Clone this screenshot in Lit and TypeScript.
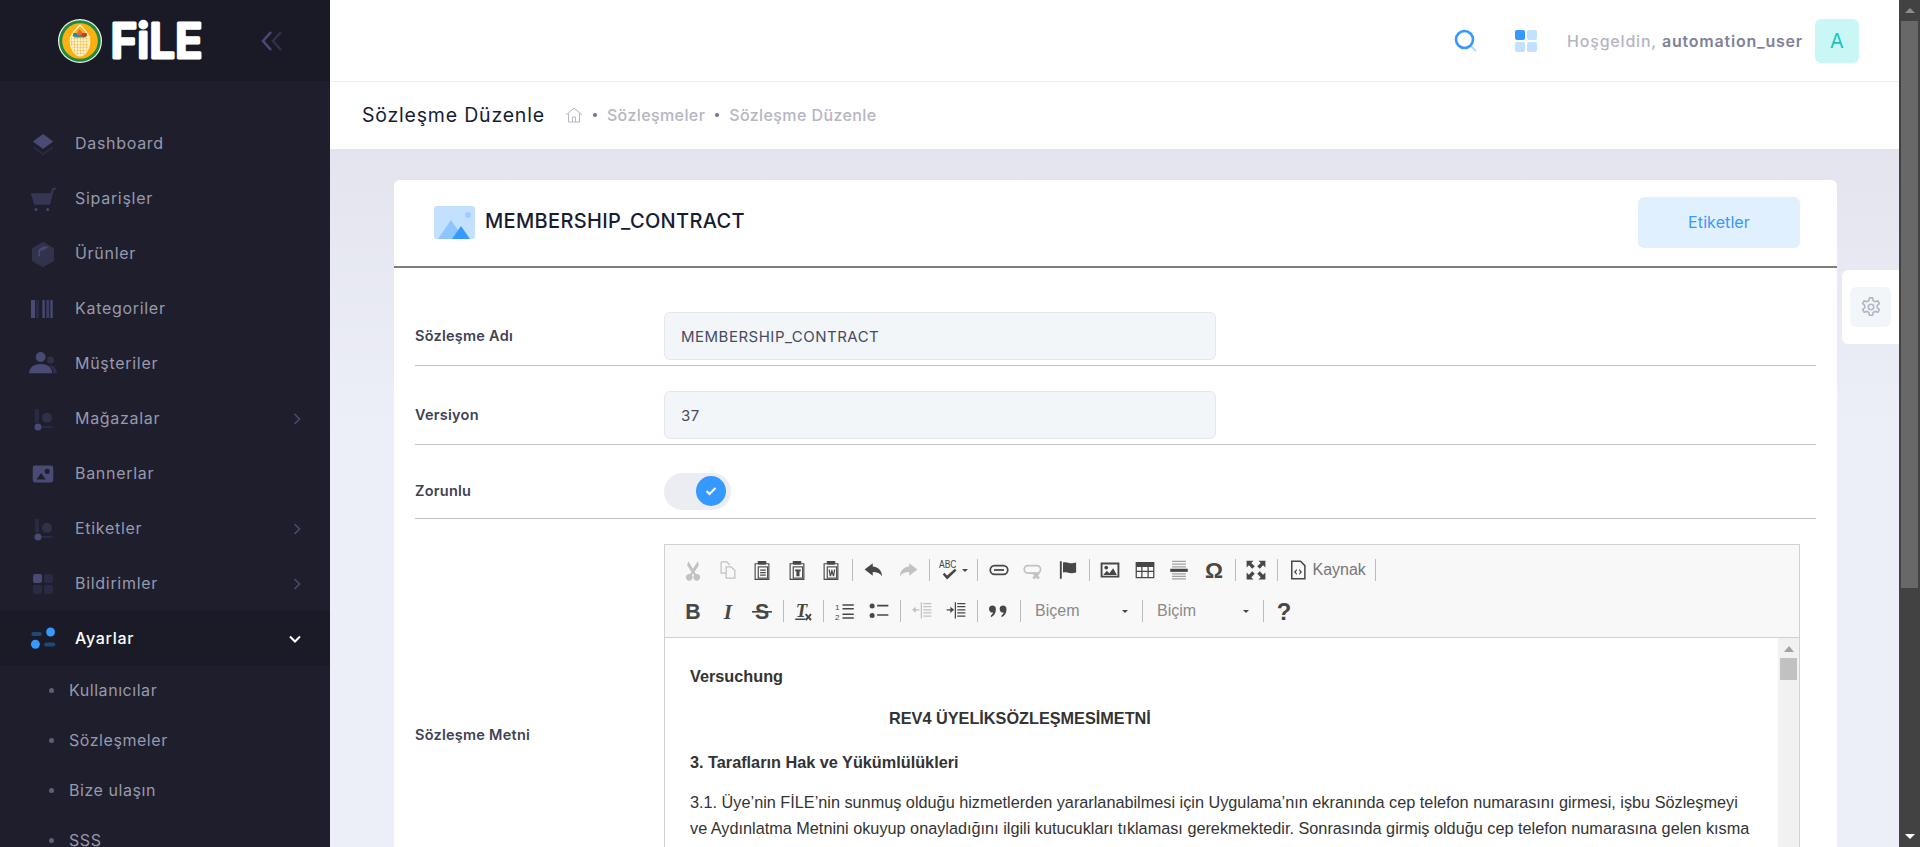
import { LitElement, css, html, svg } from 'lit';
import { customElement } from 'lit/decorators.js';

const DIM = '#494b74';

const duo = (body: unknown) =>
  html`<svg viewBox="0 0 24 24" width="28" height="28" fill="${DIM}">${body}</svg>`;

const ROUTE = svg`<path opacity=".3" d="M5 3.500h3.500V15H5ZM9 18h11v1.500H9Z"/><circle cx="7.700" cy="18.900" r="3"/><circle opacity=".4" cx="15.400" cy="11" r="4.300"/>`;

const navIcons: Record<string, unknown> = {
  layers: duo(svg`<g transform="translate(1.600 1.600) scale(.87)"><path d="M12 2 22 9.600 12 17 2 9.600Z"/><path opacity=".3" d="M3 14.500 12 21l9-6.500.9 1.300L12 23 2.100 15.800Z"/></g>`),
  cart: duo(svg`<path opacity=".55" d="M1.500 7h17l1.600-4.600h2.900v1.600h-1.700L18 17H4.500Z"/><circle opacity=".9" cx="6" cy="21" r="1.300"/><circle opacity=".9" cx="16" cy="21" r="1.300"/>`),
  box: duo(svg`<path opacity=".45" d="M12 1.500 21.500 7v11L12 23.300 2.500 18V7Z"/><path d="M12 5.500 17 5.500 12.800 8.500 9.500 9.500 9.500 14 8 14 8 8.500Z" opacity=".9"/>`),
  barcode: duo(svg`<path d="M1.700 4.300h3.500v15.400H1.700Z"/><path opacity=".3" d="M6 4.300h2.500v15.400H6Z"/><path d="M11.500 4.300h2v15.400h-2Z"/><path opacity=".7" d="M14.800 4.300h2.500v15.400h-2.500Z"/><path d="M18.300 4.300h2v15.400h-2Z"/>`),
  users: duo(svg`<circle cx="10" cy="6" r="4.200"/><path d="M0 20c.5-5.500 4.500-8 10-8s9.500 2.500 10 8Z"/><circle opacity=".4" cx="18.500" cy="8.500" r="3"/><path opacity=".4" d="M17 13c3.500 0 6.400 2 7 7h-2.800c-.6-3-1.800-5-4.200-7Z"/>`),
  route: duo(ROUTE),
  banner: duo(svg`<g transform="translate(2.400 2.400) scale(.8)"><path fill-rule="evenodd" d="M3.500 3h17A2.500 2.500 0 0 1 23 5.500v13a2.500 2.500 0 0 1-2.500 2.500h-17A2.500 2.500 0 0 1 1 18.500v-13A2.500 2.500 0 0 1 3.500 3Zm13 3.500a2.700 2.700 0 1 0 0 5.400 2.700 2.700 0 0 0 0-5.400ZM10 11l-5 7h10Z"/></g>`),
  grid: duo(svg`<g transform="translate(1.800 1.800) scale(.85)"><rect x="2" y="2" width="9" height="9" rx="2"/><rect opacity=".3" x="13" y="2" width="9" height="9" rx="2"/><rect opacity=".3" x="2" y="13" width="9" height="9" rx="2"/><rect opacity=".3" x="13" y="13" width="9" height="9" rx="2"/></g>`),
  settings: html`<svg viewBox="0 0 24 24" width="28" height="28" fill="#3699ff"><rect opacity=".35" x="2" y="6" width="9" height="3.500" rx="1.700"/><circle cx="18.500" cy="6" r="3.800"/><circle cx="5.500" cy="16.500" r="3.800"/><rect opacity=".35" x="13" y="15" width="9.500" height="3.500" rx="1.700"/></svg>`,
};

interface NavItem {
  label: string;
  icon: string;
  arrow?: boolean;
  active?: boolean;
}

const NAV: NavItem[] = [
  { label: 'Dashboard', icon: 'layers' },
  { label: 'Siparişler', icon: 'cart' },
  { label: 'Ürünler', icon: 'box' },
  { label: 'Kategoriler', icon: 'barcode' },
  { label: 'Müşteriler', icon: 'users' },
  { label: 'Mağazalar', icon: 'route', arrow: true },
  { label: 'Bannerlar', icon: 'banner' },
  { label: 'Etiketler', icon: 'route', arrow: true },
  { label: 'Bildirimler', icon: 'grid', arrow: true },
  { label: 'Ayarlar', icon: 'settings', active: true },
];

const SUB_NAV = ['Kullanıcılar', 'Sözleşmeler', 'Bize ulaşın', 'SSS'];

// ckeditor toolbar glyphs, all on a 16 grid, shown at 20px
const clip = (inner: unknown) => svg`
  <path d="M2.500 3H5V1.500h6V3h2.500v12.500h-11Z" fill="none" stroke="currentColor" stroke-width=".9"/>
  <path d="M5 .8h6v3H5Z"/>
  <rect x="5" y="5.500" width="7.500" height="9" fill="#f8f8f8" stroke="currentColor" stroke-width=".9"/>
  ${inner}`;

const toolGlyphs: Record<string, unknown> = {
  cut: svg`<path d="M4.200 1 8 7l3.800-6 .9 3.200L9.200 9.500l1.300 1.700a2.700 2.700 0 1 1-1.600 1L8 10.800l-.9 1.400a2.700 2.700 0 1 1-1.600-1l1.300-1.700L3.300 4.200Z"/>`,
  copy: svg`<path d="M2.500 1.500H7L9.500 4M6.500 5.500h4l3 3v6h-7ZM2.500 1.500v9h4" fill="none" stroke="currentColor"/>`,
  paste: clip(svg`<path d="M6.500 7.500H11v1H6.500ZM6.500 9.500H11v1H6.500ZM6.500 11.500H11v1H6.500Z"/>`),
  pasteText: clip(svg`<path d="M6.500 7.500H11v1.500h-1V13H7.500V9h-1Z"/>`),
  pasteWord: clip(svg`<path d="M6 7.500h1l.6 3.500.8-3.500h.6l.8 3.500.6-3.500h1L10.500 13h-1L8.800 10.500 8 13H7Z"/>`),
  undo: svg`<path d="M7 2.500.5 7.500 7 12.500V9.500c3.500 0 5.800 1 7.500 3.500-.3-4.500-3-7.500-7.500-7.800Z"/>`,
  redo: svg`<path d="M9 2.500l6.500 5L9 12.500V9.500c-3.500 0-5.800 1-7.500 3.500.3-4.500 3-7.500 7.500-7.800Z"/>`,
  spell: svg`<text x="0" y="6.500" font-family="Liberation Sans" font-size="8.500" textLength="14" lengthAdjust="spacingAndGlyphs">ABC</text><path d="M3 11.500l1.300-1.300 2.200 2.200L12.700 7l1.300 1.300-7.500 7.200Z"/>`,
  link: svg`<rect x="1" y="4.500" width="14" height="7" rx="3.500" fill="none" stroke="currentColor" stroke-width="1.400"/><path d="M4 7.300h8v1.400H4Z"/>`,
  unlink: svg`<rect x="1" y="4.500" width="13" height="6" rx="3" fill="none" stroke="currentColor" stroke-width="1.400"/><path d="M9 9.500l1.500 1.500 1.500-1.500 1.500 1.500-1.500 1.500 1.500 1.500-1.500 1.500-1.500-1.500-1.500 1.500-1.500-1.500 1.500-1.500-1.500-1.500Z"/>`,
  anchor: svg`<path d="M1.500 1h1.500v14H1.500ZM4 2c3-1 5 1 7.500.5.800 0 2-.3 3-.5v8c-3 1-5 .7-7 0-1.500-.4-2.500-.4-3.500 0Z"/>`,
  image: svg`<path fill-rule="evenodd" d="M.5 2h15v12H.5Zm1.500 1.500v9h12v-9Z"/><circle cx="5" cy="6" r="1.500"/><path d="M2.500 12l3-3.500 2 2 3-4 3 5.500Z"/>`,
  table: svg`<path fill-rule="evenodd" d="M.5 1.500h15v13H.5Zm1 4v3h3.500v-3Zm4.500 0v3h4v-3Zm5 0v3h3.500v-3Zm-9.500 4v4h3.500v-4Zm4.500 0v4h4v-4Zm5 0v4h3.500v-4Z"/>`,
  hr: svg`<path d="M1 7h14v2.500H1Z"/><path opacity=".5" d="M2.500 .5h11v1h-11ZM2.500 2.800h11v1h-11ZM2.500 5h11v1h-11ZM2.500 10.500h11v1h-11ZM2.500 12.500h11v1h-11ZM2.500 14.500h11v1h-11Z"/>`,
  omega: svg`<text x="8" y="14" text-anchor="middle" font-family="Liberation Sans" font-size="18" font-weight="700">Ω</text>`,
  maximize: svg`<path d="M.5.500h5.500L4.200 2.300 7 5 5 7 2.300 4.200.5 6ZM15.500.500V6l-1.800-1.800L11 7 9 5l2.800-2.700L10 .5ZM.5 15.500V10l1.800 1.800L5 9l2 2-2.800 2.700L6 15.500ZM15.500 15.500H10l1.800-1.800L9 11l2-2 2.700 2.800L15.500 10Z"/>`,
  source: svg`<path d="M3 1h7l3.500 3.500V15H3Z" fill="none" stroke="currentColor" stroke-width="1.200"/><path d="M7 7 4.800 9.500 7 12V10.500L6.200 9.500 7 8.500ZM9 7l2.200 2.500L9 12v-1.500l.8-1-.8-1Z"/>`,
  bold: svg`<text x="8" y="14" text-anchor="middle" font-family="Liberation Sans" font-size="17" font-weight="700">B</text>`,
  italic: svg`<text x="8" y="14" text-anchor="middle" font-family="Liberation Serif" font-size="17" font-weight="700" font-style="italic">I</text>`,
  strike: svg`<text x="8" y="14" text-anchor="middle" font-family="Liberation Sans" font-size="17" font-weight="700">S</text><path d="M0 8h16v1.300H0Z"/>`,
  removeFormat: svg`<text x="6" y="12.500" text-anchor="middle" font-family="Liberation Serif" font-size="15" font-weight="700" font-style="italic">T</text><path d="M1 14h8v1.200H1Z"/><path d="M10 10l1.500 1.700L13 10l1.200 1-1.600 1.800 1.600 1.900-1.200 1-1.500-1.800L10 15.700l-1.200-1 1.600-1.900L8.800 11Z"/>`,
  numbered: svg`<path d="M6 2.500h9v1.200H6ZM6 5.500h9v1.200H6ZM6 10h9v1.200H6ZM6 13h9v1.200H6Z"/><text x="0" y="7" font-family="Liberation Sans" font-size="6.500">1</text><text x="0" y="15" font-family="Liberation Sans" font-size="6.500">2</text>`,
  bulleted: svg`<circle cx="2.500" cy="4" r="2"/><circle cx="2.500" cy="11.500" r="2"/><path d="M6.500 3h9v1.300h-9ZM6.500 10.500h9v1.300h-9Z"/>`,
  outdent: svg`<path d="M9 1.500h6.500v1H9ZM9 4h6.500v1H9ZM9 6.500h6.500v1H9ZM9 9h6.500v1H9ZM9 11.500h6.500v1H9ZM7 1h1v13H7Z"/><path d="M6 6.500H3v-2L0 7l3 2.500v-2h3Z"/>`,
  indent: svg`<path d="M9 1.500h6.500v1H9ZM9 4h6.500v1H9ZM9 6.500h6.500v1H9ZM9 9h6.500v1H9ZM9 11.500h6.500v1H9ZM7 1h1v13H7Z"/><path d="M.5 6.500h3v-2L6.500 7l-3 2.500v-2h-3Z"/>`,
  quote: svg`<path d="M2.500 3.500a3 3 0 0 1 3 3c0 3-1.500 5.500-4 6.500v-1.500c1-.6 1.500-1.500 1.800-2.300A2.800 2.800 0 0 1 2.500 3.500ZM11 3.500a3 3 0 0 1 3 3c0 3-1.500 5.500-4 6.500v-1.500c1-.6 1.500-1.500 1.800-2.300a2.800 2.800 0 0 1-.8-5.700Z"/>`,
  help: svg`<text x="8" y="15" text-anchor="middle" font-family="Liberation Sans" font-size="19" font-weight="700">?</text>`,
};

type Tool =
  | { sep: true }
  | { glyph: string; off?: boolean; caret?: boolean; label?: string; narrow?: boolean }
  | { combo: string; width: number };

const SEP: Tool = { sep: true };

const ROW_ONE: Tool[] = [
  { glyph: 'cut', off: true },
  { glyph: 'copy', off: true },
  { glyph: 'paste' },
  { glyph: 'pasteText' },
  { glyph: 'pasteWord' },
  SEP,
  { glyph: 'undo' },
  { glyph: 'redo', off: true },
  SEP,
  { glyph: 'spell', caret: true },
  SEP,
  { glyph: 'link' },
  { glyph: 'unlink', off: true },
  { glyph: 'anchor' },
  SEP,
  { glyph: 'image' },
  { glyph: 'table' },
  { glyph: 'hr' },
  { glyph: 'omega' },
  SEP,
  { glyph: 'maximize' },
  SEP,
  { glyph: 'source', label: 'Kaynak' },
  SEP,
];

const ROW_TWO: Tool[] = [
  { glyph: 'bold' },
  { glyph: 'italic' },
  { glyph: 'strike' },
  SEP,
  { glyph: 'removeFormat', narrow: true },
  SEP,
  { glyph: 'numbered' },
  { glyph: 'bulleted' },
  SEP,
  { glyph: 'outdent', off: true },
  { glyph: 'indent' },
  SEP,
  { glyph: 'quote' },
  SEP,
  { combo: 'Biçem', width: 114 },
  SEP,
  { combo: 'Biçim', width: 113 },
  SEP,
  { glyph: 'help' },
];

@customElement('app-root')
export class AppRoot extends LitElement {
  static override styles = css`
    :host {
      display: block;
      height: 847px;
      overflow: hidden;
      font-family: Inter, 'Noto Sans', sans-serif;
    }
    .page {
      display: flex;
      height: 847px;
      overflow: hidden;
    }

    /* sidebar */
    .aside {
      flex: 0 0 330px;
      background: #1e1e2d;
      overflow: hidden;
    }
    .brand {
      height: 81px;
      background: #1a1a27;
      display: flex;
      align-items: center;
      padding-left: 58px;
      box-sizing: border-box;
    }
    .brand-mark {
      flex: none;
    }
    .brand-name {
      flex: none;
      margin-left: 7px;
    }
    .collapse {
      margin-left: 56px;
      flex: none;
    }
    .menu {
      padding-top: 35px;
    }
    .nav {
      display: flex;
      align-items: center;
      height: 55px;
      padding-left: 29px;
      padding-right: 29px;
      color: #9899ac;
      font-size: 16px;
      letter-spacing: 0.7px;
    }
    .nav > svg {
      flex: none;
    }
    .nav span {
      margin-left: 18px;
      flex: 1;
      padding-bottom: 2px;
    }
    .nav.active {
      background: #1b1b28;
      color: #fff;
      font-weight: 500;
    }
    .subs {
      margin-top: -1px;
    }
    .sub {
      display: flex;
      align-items: center;
      height: 50px;
      padding-left: 49px;
      color: #9899ac;
      font-size: 16px;
      letter-spacing: 0.55px;
    }
    .sub i {
      width: 5px;
      height: 5px;
      border-radius: 50%;
      background: #5f6076;
      margin-right: 15px;
    }

    /* main column */
    .main {
      flex: 1;
      min-width: 0;
      display: flex;
      flex-direction: column;
      position: relative;
      background: #eceef8;
    }
    .topbar {
      height: 81px;
      flex: none;
      background: #fff;
      border-bottom: 1px solid #ebedf3;
      display: flex;
      align-items: center;
      justify-content: flex-end;
      padding-right: 40px;
    }
    .topbar .search {
      margin-right: 36px;
    }
    .topbar .apps {
      margin-right: 29px;
    }
    .hello {
      font-size: 16px;
      font-weight: 500;
      color: #b5b5c3;
      letter-spacing: 0.8px;
      margin-right: 12px;
      white-space: nowrap;
    }
    .hello b {
      font-weight: 600;
      color: #7e8299;
    }
    .avatar {
      width: 44px;
      height: 44px;
      border-radius: 6px;
      background: #c9f7f5;
      color: #1bc5bd;
      font-size: 20px;
      display: flex;
      align-items: center;
      justify-content: center;
    }
    .subbar {
      height: 65px;
      padding: 0 0 2px 32px;
      flex: none;
      background: #fff;
      display: flex;
      align-items: center;
    }
    .subbar h1 {
      margin: 0 20px 0 0;
      font-size: 19.500px;
      font-weight: 400;
      color: #181c32;
      letter-spacing: 0.8px;
    }
    .crumbs {
      display: flex;
      align-items: center;
      color: #b5b5c3;
      font-size: 16px;
      font-weight: 500;
      letter-spacing: 0.4px;
    }
    .crumbs i {
      width: 4px;
      height: 4px;
      border-radius: 50%;
      background: #6c7293;
      margin: 0 10px;
    }

    /* card */
    .content {
      flex: 1;
      min-height: 0;
      padding: 31px 62px 0 64px;
      overflow: hidden;
      background: linear-gradient(#e3e4ee 0, #eceef8 280px);
    }
    .card {
      background: #fff;
      border-radius: 6px 6px 0 0;
    }
    .card-head {
      height: 84px;
      padding: 0 37px 2px 40px;
      border-bottom: 2px solid #7e7e7e;
      display: flex;
      align-items: center;
    }
    .card-head h2 {
      flex: 1;
      margin: 0 0 2px 10px;
      font-size: 20px;
      font-weight: 450;
      color: #181c32;
      letter-spacing: 0.33px;
    }
    .btn {
      width: 162px;
      height: 51px;
      border-radius: 6px;
      background: #e1f0ff;
      color: #3699ff;
      font-size: 16px;
      letter-spacing: 0.1px;
      display: flex;
      align-items: center;
      justify-content: center;
    }
    .form {
      padding: 44px 21px 0;
    }
    .row {
      display: flex;
      align-items: center;
      border-bottom: 1px solid #c4c4c4;
      padding-bottom: 5px;
      margin-bottom: 25px;
    }
    .row.switch-row {
      padding-bottom: 8px;
      margin-top: 28px;
    }
    .row.editor-row {
      border-bottom: 0;
      padding-bottom: 0;
    }
    .row label {
      flex: 0 0 249px;
      font-size: 14.500px;
      font-weight: 600;
      color: #3f4254;
      letter-spacing: 0.25px;
      padding-bottom: 2px;
    }
    .input {
      width: 552px;
      height: 48px;
      box-sizing: border-box;
      background: #f3f6f9;
      border: 1px solid #e4e6ef;
      border-radius: 6px;
      padding-left: 16px;
      display: flex;
      align-items: center;
      font-size: 15px;
      color: #474b60;
      letter-spacing: 0.5px;
    }
    .switch {
      width: 67px;
      height: 37px;
      border-radius: 19px;
      background: #ebedf3;
      position: relative;
    }
    .knob {
      position: absolute;
      right: 5px;
      top: 3px;
      width: 30px;
      height: 30px;
      border-radius: 50%;
      background: #3699ff;
      display: flex;
      align-items: center;
      justify-content: center;
    }

    /* editor */
    .editor {
      width: 1136px;
      height: 382px;
      box-sizing: border-box;
      border: 1px solid #d1d1d1;
      font-family: 'Liberation Sans', Arial, sans-serif;
      display: flex;
      flex-direction: column;
    }
    .toolbar {
      flex: none;
      height: 93px;
      box-sizing: border-box;
      background: #f8f8f8;
      border-bottom: 1px solid #d1d1d1;
      padding: 8px 0 0 11px;
    }
    .tools {
      display: flex;
      align-items: center;
      height: 34px;
      margin-bottom: 7px;
      color: #474747;
    }
    .tool {
      flex: none;
      width: 34.500px;
      height: 34px;
      display: flex;
      align-items: center;
      justify-content: center;
    }
    .tool svg {
      overflow: visible;
    }
    .tool.off svg {
      opacity: 0.3;
    }
    .tool.narrow {
      width: 32px;
    }
    .tool.caret {
      width: 40px;
    }
    .tool.caret::after,
    .combo::after {
      content: '';
      border: 3px solid transparent;
      border-top: 3px solid #474747;
      border-bottom: 0;
      margin-left: 3px;
    }
    .tool.labeled {
      width: auto;
      padding: 0 6px;
    }
    .tool.labeled span {
      font-size: 16px;
      color: #777;
      margin-left: 5px;
    }
    .sep {
      flex: none;
      width: 8px;
      height: 22px;
      display: flex;
      justify-content: center;
    }
    .sep::before {
      content: '';
      width: 1px;
      background: #bcbcbc;
    }
    .combo {
      flex: none;
      box-sizing: border-box;
      height: 34px;
      display: flex;
      align-items: center;
      justify-content: space-between;
      font-size: 16px;
      color: #8a8a8a;
      padding: 0 10px 0 11px;
    }
    .body {
      flex: 1;
      min-height: 0;
      display: flex;
      background: #fff;
    }
    .doc {
      flex: 1;
      min-width: 0;
      padding: 0 0 0 25px;
      font-size: 16.250px;
      color: #333;
      overflow: hidden;
      white-space: nowrap;
    }
    .doc p {
      margin: 0;
      line-height: 26px;
    }
    .doc .v {
      margin-top: 25px;
    }
    .doc .c {
      margin-top: 16px;
      padding-left: 199px;
    }
    .doc .h {
      margin-top: 18px;
    }
    .doc .t {
      margin-top: 14px;
    }
    .bar {
      flex: none;
      width: 21px;
      background: #f1f1f1;
      display: flex;
      flex-direction: column;
      align-items: center;
    }
    .bar .up {
      margin-top: 8px;
      border: 5px solid transparent;
      border-bottom: 6px solid #a3a3a3;
      border-top: 0;
    }
    .bar .thumb {
      margin-top: 6px;
      width: 17px;
      height: 22px;
      background: #c1c1c1;
    }

    /* settings tab hanging off the right edge */
    .tab {
      position: absolute;
      right: 0;
      top: 270px;
      width: 57px;
      height: 74px;
      background: #fff;
      border-radius: 6px 0 0 6px;
      display: flex;
      align-items: center;
      justify-content: center;
    }
    .tab div {
      width: 41px;
      height: 40px;
      border-radius: 6px;
      background: #f3f6f9;
      display: flex;
      align-items: center;
      justify-content: center;
    }

    /* window scrollbar */
    .winbar {
      flex: 0 0 21px;
      background: #424242;
      display: flex;
      flex-direction: column;
      align-items: center;
    }
    .winbar .arrow-up {
      height: 21px;
      box-sizing: border-box;
      padding-top: 8px;
    }
    .winbar .arrow-up::before {
      content: '';
      display: block;
      border: 5px solid transparent;
      border-bottom: 5px solid #8d8d8d;
      border-top: 0;
    }
    .winbar .thumb {
      width: 17px;
      height: 567px;
      background: #686868;
    }
    .winbar .arrow-down {
      margin-top: auto;
      height: 21px;
      box-sizing: border-box;
      padding-top: 8px;
    }
    .winbar .arrow-down::before {
      content: '';
      display: block;
      border: 5px solid transparent;
      border-top: 5px solid #fff;
      border-bottom: 0;
    }
  `;

  private renderLogo() {
    return html`
      <svg class="brand-mark" width="44" height="44" viewBox="0 0 44 44">
        <defs>
          <pattern id="weave" width="3" height="3" patternUnits="userSpaceOnUse">
            <rect width="3" height="3" fill="#fff2cc" />
            <circle cx="1.500" cy="1.500" r=".9" fill="#f6b73c" />
          </pattern>
        </defs>
        <circle cx="22" cy="22" r="22" fill="#f4f4f4" />
        <circle cx="22" cy="22" r="20.800" fill="#1f8a3b" />
        <circle cx="22" cy="22" r="17.800" fill="#fdb012" />
        <path d="M22 6c3 3 7 7 9 12H13c2-5 6-9 9-12Z" fill="#fdb012" stroke="#fff4d6" stroke-width="1.200" />
        <path d="M12.500 18h19c1.500 9-3 19-9.500 19s-11-10-9.500-19Z" fill="url(#weave)" stroke="#fff4d6" stroke-width="1" />
        <path d="M15 14h14l-1.500 4.500h-11Z" fill="#1aa260" />
        <path d="M18.500 16l2.500-6 3 3 .5 3Z" fill="#e8663c" />
        <path d="M24 14.500h4.500v3H24Z" fill="#d92b2b" />
        <path d="M15 14.500h4v3h-4Z" fill="#1e88c9" />
      </svg>
      <svg class="brand-name" width="96" height="60" viewBox="0 0 96 60">
        <text
          x="1.500"
          y="47"
          font-family="Inter, sans-serif"
          font-size="48"
          font-weight="600"
          fill="#fff"
          stroke="#fff"
          stroke-width="3"
          stroke-linejoin="round"
          textLength="92"
          lengthAdjust="spacingAndGlyphs"
        >FiLE</text>
      </svg>
      <svg class="collapse" width="22" height="20" viewBox="0 0 22 20" fill="none" stroke-width="2.500">
        <path d="M10 1 2 10l8 9" stroke="#494b74" />
        <path d="M20 1l-8 9 8 9" stroke="#2f3050" />
      </svg>
    `;
  }

  private renderNav(item: NavItem) {
    return html`
      <div class="nav ${item.active ? 'active' : ''}">
        ${navIcons[item.icon]}
        <span>${item.label}</span>
        ${item.arrow
          ? html`<svg width="8" height="12" viewBox="0 0 8 12" fill="none" stroke="#494b74" stroke-width="1.500"><path d="M1.500 1l5 5-5 5" /></svg>`
          : ''}
        ${item.active
          ? html`<svg width="12" height="8" viewBox="0 0 12 8" fill="none" stroke="#fff" stroke-width="2"><path d="M1 1.500l5 5 5-5" /></svg>`
          : ''}
      </div>
    `;
  }

  private renderTool(tool: Tool) {
    if ('sep' in tool) return html`<div class="sep"></div>`;
    if ('combo' in tool) {
      return html`<div class="combo" style="width:${tool.width}px">${tool.combo}</div>`;
    }
    const cls = `tool ${tool.off ? 'off' : ''} ${tool.caret ? 'caret' : ''} ${tool.label ? 'labeled' : ''} ${tool.narrow ? 'narrow' : ''}`;
    return html`
      <div class=${cls}>
        <svg width="20" height="20" viewBox="0 0 16 16" fill="currentColor">${toolGlyphs[tool.glyph]}</svg>
        ${tool.label ? html`<span>${tool.label}</span>` : ''}
      </div>
    `;
  }

  override render() {
    return html`
      <div class="page">
        <aside class="aside">
          <div class="brand">${this.renderLogo()}</div>
          <nav class="menu">
            ${NAV.map((item) => this.renderNav(item))}
            <div class="subs">
              ${SUB_NAV.map((label) => html`<div class="sub"><i></i>${label}</div>`)}
            </div>
          </nav>
        </aside>

        <div class="main">
          <header class="topbar">
            <svg class="search" width="24" height="24" viewBox="0 0 24 24" fill="none">
              <circle cx="10.500" cy="10.500" r="8.500" stroke="#3699ff" stroke-width="2.600" />
              <path d="M17 17l5 5" stroke="#3699ff" stroke-opacity=".35" stroke-width="2.200" />
            </svg>
            <svg class="apps" width="24" height="24" viewBox="0 0 24 24" fill="#3699ff">
              <rect x="1" y="1" width="10" height="10" rx="2" />
              <rect opacity=".3" x="13" y="1" width="10" height="10" rx="2" />
              <rect opacity=".3" x="1" y="13" width="10" height="10" rx="2" />
              <rect opacity=".3" x="13" y="13" width="10" height="10" rx="2" />
            </svg>
            <div class="hello">Hoşgeldin, <b>automation_user</b></div>
            <div class="avatar">A</div>
          </header>

          <div class="subbar">
            <h1>Sözleşme Düzenle</h1>
            <div class="crumbs">
              <svg width="18" height="18" viewBox="0 0 18 18" fill="none" stroke="#b5b5c3" stroke-width="1">
                <path d="M1 9 9 2l8 7M3.500 7.500V16h11V7.500M7.500 16v-5h3v5" />
              </svg>
              <i></i>Sözleşmeler<i></i>Sözleşme Düzenle
            </div>
          </div>

          <div class="content">
            <section class="card">
              <div class="card-head">
                <svg width="41" height="33" viewBox="0 0 41 33">
                  <rect width="41" height="33" rx="3" fill="#c3e0ff" />
                  <circle cx="34" cy="9" r="3" fill="#9fcdff" />
                  <path d="M4 33 17 14l13 19Z" fill="#8fc5ff" />
                  <path d="M18 33l9-13 9 13Z" fill="#3699ff" />
                </svg>
                <h2>MEMBERSHIP_CONTRACT</h2>
                <div class="btn">Etiketler</div>
              </div>

              <div class="form">
                <div class="row">
                  <label>Sözleşme Adı</label>
                  <div class="input">MEMBERSHIP_CONTRACT</div>
                </div>
                <div class="row">
                  <label>Versiyon</label>
                  <div class="input">37</div>
                </div>
                <div class="row switch-row">
                  <label>Zorunlu</label>
                  <div class="switch">
                    <div class="knob">
                      <svg width="12" height="10" viewBox="0 0 12 10" fill="none" stroke="#fff" stroke-width="2">
                        <path d="M1.500 5l3 3 6-6" />
                      </svg>
                    </div>
                  </div>
                </div>
                <div class="row editor-row">
                  <label>Sözleşme Metni</label>
                  <div class="editor">
                    <div class="toolbar">
                      <div class="tools">${ROW_ONE.map((t) => this.renderTool(t))}</div>
                      <div class="tools">${ROW_TWO.map((t) => this.renderTool(t))}</div>
                    </div>
                    <div class="body">
                      <div class="doc">
                        <p class="v"><b>Versuchung</b></p>
                        <p class="c"><b>REV4 ÜYELİKSÖZLEŞMESİMETNİ</b></p>
                        <p class="h"><b>3. Tarafların Hak ve Yükümlülükleri</b></p>
                        <p class="t">
                          3.1. Üye’nin FİLE’nin sunmuş olduğu hizmetlerden yararlanabilmesi için Uygulama’nın ekranında cep telefon numarasını girmesi, işbu Sözleşmeyi<br />
                          ve Aydınlatma Metnini okuyup onayladığını ilgili kutucukları tıklaması gerekmektedir. Sonrasında girmiş olduğu cep telefon numarasına gelen kısma
                        </p>
                      </div>
                      <div class="bar"><div class="up"></div><div class="thumb"></div></div>
                    </div>
                  </div>
                </div>
              </div>
            </section>
          </div>

          <div class="tab">
            <div>
              <svg width="22" height="22" viewBox="0 0 24 24" fill="none" stroke="#b5b5c3" stroke-width="1.800" stroke-linejoin="round">
                <circle cx="12" cy="12" r="3" />
                <path d="M10.300 2h3.400l.6 3 2.200 1.200 2.900-1 1.700 3-2.300 2v2.600l2.300 2-1.700 3-2.900-1-2.200 1.200-.6 3h-3.400l-.6-3-2.200-1.200-2.900 1-1.700-3 2.300-2v-2.600l-2.300-2 1.700-3 2.900 1 2.200-1.200Z" />
              </svg>
            </div>
          </div>
        </div>

        <div class="winbar">
          <div class="arrow-up"></div>
          <div class="thumb"></div>
          <div class="arrow-down"></div>
        </div>
      </div>
    `;
  }
}
